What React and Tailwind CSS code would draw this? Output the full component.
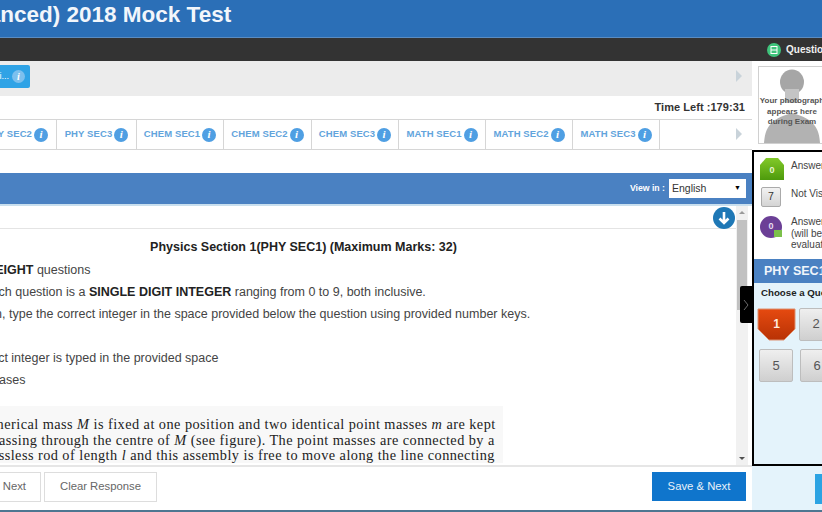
const sans = { fontFamily: '"Liberation Sans", Arial, sans-serif' };

function Info({ size = 14, className = "" }) {
  return (
    <span
      className={`inline-flex shrink-0 items-center justify-center rounded-full bg-[#4f9fe3] text-white font-bold italic ${className}`}
      style={{ width: size, height: size, fontSize: size - 3, fontFamily: '"Liberation Serif", serif', lineHeight: 1 }}
    >
      i
    </span>
  );
}

function Tab({ label, w }) {
  return (
    <div className={`${w} h-full shrink-0 flex items-center justify-center gap-[2px] border-r border-[#d6d6d6] text-[9.5px] font-bold text-[#62a4dc] tracking-[0.1px]`}>
      <span>{label}</span>
      <Info />
    </div>
  );
}

function Arrow() {
  return <div className="h-0 w-0 border-y-[6px] border-y-transparent border-l-[6px] border-l-[#c9d3da]" />;
}

function QBtn({ n, className = "" }) {
  return (
    <div className={`w-[34px] h-[33px] shrink-0 flex items-center justify-center rounded-[2px] border border-[#bdbdbd] bg-gradient-to-b from-[#efefef] to-[#cfcfcf] text-[13px] text-[#555] ${className}`}>
      {n}
    </div>
  );
}

export default function App() {
  return (
    <div className="w-[822px] h-[512px] overflow-hidden flex flex-col bg-white text-[#333]" style={sans}>
      <div className="h-[38px] shrink-0 bg-[#2b6fb7] border-b border-[#5a8cc2] flex items-center">
        <span className="ml-[-111px] whitespace-nowrap text-[22.5px] font-bold text-[#f2f6fb] leading-none pb-[7px]">JEE (Advanced) 2018 Mock Test</span>
      </div>
      <div className="h-[23px] shrink-0 bg-[#333333] flex items-center justify-end">
        <div className="w-[70px] shrink-0 flex items-center gap-[5px] pl-[15px] overflow-hidden whitespace-nowrap text-[10px] font-bold text-[#f0f0f0]">
          <svg width="14" height="14" viewBox="0 0 14 14" className="shrink-0">
            <circle cx="7" cy="7" r="7" fill="#3fc47c" />
            <rect x="4" y="3.5" width="6" height="7" fill="none" stroke="#fff" strokeWidth="1" />
            <path d="M4 7h6" stroke="#fff" strokeWidth="1" />
          </svg>
          <span>Question Paper</span>
        </div>
      </div>
      <div className="flex-1 min-h-0 flex">
        <div className="w-[752px] shrink-0 flex flex-col relative">
          <div className="h-[35px] shrink-0 bg-[#ececec] flex items-center justify-between pr-[10px] pb-[5px]">
            <div className="h-[23px] w-[30px] mt-[1px] bg-[#2fa3e6] rounded-r-[2px] flex items-center justify-end gap-[3px] pr-[5px] text-[9px] text-white overflow-hidden whitespace-nowrap">
              <span>i...</span>
              <Info size={13} className="!bg-[#7cc0ee]" />
            </div>
            <Arrow />
          </div>
          <div className="h-[23px] shrink-0 flex items-center justify-end pr-[7px] text-[11px] font-bold tracking-[0.05px] text-[#333]">Time Left :179:31</div>
          <div className="h-[31px] shrink-0 border-y border-[#d6d6d6] flex items-center overflow-hidden relative">
            <div className="flex h-full ml-[-32px]">
              <div className="w-[89px] h-full shrink-0 flex items-center justify-end gap-[2px] pr-[8px] border-r border-[#d6d6d6] text-[9.5px] font-bold text-[#62a4dc] tracking-[0.1px]">
                <span>PHY SEC2</span>
                <Info />
              </div>
              <Tab label="PHY SEC3" w="w-[80px]" />
              <Tab label="CHEM SEC1" w="w-[87px]" />
              <Tab label="CHEM SEC2" w="w-[88px]" />
              <Tab label="CHEM SEC3" w="w-[87px]" />
              <Tab label="MATH SEC1" w="w-[87px]" />
              <Tab label="MATH SEC2" w="w-[87px]" />
              <Tab label="MATH SEC3" w="w-[87px]" />
            </div>
            <div className="absolute right-[10px] top-[8px]"><Arrow /></div>
          </div>
          <div className="h-[23px] shrink-0" />
          <div className="h-[33px] shrink-0 bg-[#4a81c2] border-b-[2px] border-[#c9dfee] flex items-center justify-end pr-[6px] gap-[4px]">
            <span className="text-[8.7px] font-bold text-white">View in :</span>
            <div className="w-[77px] h-[19px] bg-white flex items-center justify-between pl-[3px] pr-[5px] text-[10.5px] text-[#333]">
              <span>English</span>
              <span className="text-[7px] text-black">▼</span>
            </div>
          </div>
          <div className="h-[259px] shrink-0 flex pr-[4px]">
            <div className="flex-1 min-w-0 flex flex-col overflow-hidden">
              <div className="h-[23px] shrink-0 border-b border-[#e4e4e4] flex justify-end items-start pt-[1px]">
                <svg width="22" height="22" viewBox="0 0 22 22" className="shrink-0 mr-[1px]">
                  <circle cx="11" cy="11" r="11" fill="#1f78b6" />
                  <path d="M11 5v11M6.5 11.5L11 16l4.5-4.5" fill="none" stroke="#fff" strokeWidth="2.6" />
                </svg>
              </div>
              <div className="h-[35px] shrink-0 flex items-center justify-center pt-[1px]">
                <span className="text-[12.5px] font-bold text-[#222] ml-[-129px]">Physics Section 1(PHY SEC1) (Maximum Marks: 32)</span>
              </div>
              <div className="text-[12.5px] leading-[22px] whitespace-nowrap text-[#444] mt-[-5px]">
                <div className="ml-[-125px]">This section contains <b className="text-[#222]">EIGHT</b> questions</div>
                <div className="ml-[-98px]">The answer to each question is a <b className="text-[#222]">SINGLE DIGIT INTEGER</b> ranging from 0 to 9, both inclusive.</div>
                <div className="ml-[-98px]">For each question, type the correct integer in the space provided below the question using provided number keys.</div>
                <div className="h-[22px]" />
                <div className="ml-[-88px]">If only the correct integer is typed in the provided space</div>
                <div className="ml-[-69px]">In all other cases</div>
              </div>
              <div className="mt-[15px] w-[503px] h-[57px] shrink-0 bg-[#f8f8f8] overflow-hidden pt-[11px]">
                <div className="text-[14.3px] leading-[15.5px] whitespace-nowrap text-[#222] tracking-[0.45px]" style={{ fontFamily: '"Liberation Serif", serif' }}>
                  <div className="ml-[-31px]">A spherical mass <i>M</i> is fixed at one position and two identical point masses <i>m</i> are kept</div>
                  <div className="ml-[-66px]">on a line passing through the centre of <i>M</i> (see figure). The point masses are connected by a</div>
                  <div className="ml-[-53px]">rigid massless rod of length <i>l</i> and this assembly is free to move along the line connecting</div>
                </div>
              </div>
            </div>
            <div className="w-[12px] shrink-0 bg-[#f1f1f1] flex flex-col items-center justify-between py-[5px] relative">
              <div className="h-0 w-0 border-x-[3px] border-x-transparent border-b-[3px] border-b-[#9a9a9a]" />
              <div className="absolute left-[1px] right-[1px] top-[14px] h-[90px] bg-[#c1c1c1]" />
              <div className="h-0 w-0 border-x-[3px] border-x-transparent border-t-[3px] border-t-[#505050]" />
            </div>
          </div>
          <div className="h-[45px] shrink-0 border-t-[2px] border-[#e6e6e6] flex items-center justify-between pr-[6px] pb-[4px]">
            <div className="flex gap-[3px] text-[11.3px] text-[#666]">
              <div className="w-[42px] h-[30px] ml-[-1px] border border-[#ddd] flex items-center justify-end pr-[14px]">Next</div>
              <div className="w-[113px] h-[30px] border border-[#ddd] flex items-center justify-center">Clear Response</div>
            </div>
            <div className="w-[94px] h-[29px] bg-[#0f75cc] text-[11.3px] text-[#e8f1fa] flex items-center justify-center">Save &amp; Next</div>
          </div>
          <div className="absolute left-[740px] top-[225px] w-[12px] h-[37px] bg-black rounded-l-[2px] flex items-center justify-center">
            <svg width="6" height="12" viewBox="0 0 6 12"><path d="M1 1l4 5-4 5" fill="none" stroke="#888" strokeWidth="0.8" /></svg>
          </div>
        </div>
        <div className="flex-1 min-w-0 flex flex-col bg-[#e4f3fb] overflow-hidden">
          <div className="h-[89px] shrink-0 bg-white pl-[6px] pt-[5px]">
            <div className="w-[90px] h-[78px] border border-[#d0d0d0] relative overflow-hidden">
              <svg width="88" height="76" viewBox="0 0 88 76" className="absolute left-0 top-0">
                <ellipse cx="33" cy="15" rx="12" ry="12.5" fill="#a6a6a6" />
                <path d="M26 22h14v14H26z" fill="#c4c4c4" />
                <path d="M5 76c1-14 5-24 28-30 23 6 27 16 28 30z" fill="#b2b2b2" />
              </svg>
              <div className="absolute left-[-2px] w-[70px] top-[29px] text-center text-[8px] font-bold leading-[10.5px] text-[#555]">
                Your photograph appears here during Exam
              </div>
            </div>
          </div>
          <div className="h-[316px] shrink-0 border-2 border-r-0 border-black flex flex-col">
            <div className="h-[107px] shrink-0 bg-white relative text-[10px] text-[#444] whitespace-nowrap">
              <svg width="24" height="22" viewBox="0 0 24 22" className="absolute left-[6px] top-[6px]">
                <defs>
                  <linearGradient id="g" x1="0" y1="0" x2="0" y2="1"><stop offset="0" stopColor="#82c929" /><stop offset="1" stopColor="#4d9a0c" /></linearGradient>
                </defs>
                <path d="M6 0h12l6 7v15H0V7z" fill="url(#g)" />
                <text x="12" y="15" textAnchor="middle" fontSize="9" fontWeight="bold" fill="#e8f5d0">0</text>
              </svg>
              <span className="absolute left-[37px] top-[6px]">Answered</span>
              <div className="absolute left-[7px] top-[35px] w-[20px] h-[20px] border border-[#aaa] rounded-[2px] bg-gradient-to-b from-[#f2f2f2] to-[#d4d4d4] flex items-center justify-center text-[10.5px] text-[#333]">7</div>
              <span className="absolute left-[37px] top-[34px]">Not Visited</span>
              <svg width="24" height="24" viewBox="0 0 24 24" className="absolute left-[6px] top-[64px]">
                <circle cx="11" cy="11" r="11" fill="#6b3f96" />
                <text x="11" y="13" textAnchor="middle" fontSize="9" fontWeight="bold" fill="#e6dcef">0</text>
                <rect x="14" y="14" width="8" height="7" fill="#7cc04b" />
              </svg>
              <div className="absolute left-[37px] top-[64px] leading-[11.5px]">
                <div>Answered &amp; Marked</div>
                <div>(will be considered for</div>
                <div>evaluation)</div>
              </div>
            </div>
            <div className="h-[24px] shrink-0 bg-[#4a81c2] pl-[10px] flex items-center text-[12.5px] font-bold text-[#f0f5fb] whitespace-nowrap">PHY SEC1</div>
            <div className="h-[20px] shrink-0 pl-[7px] flex items-center text-[9.7px] font-bold text-[#222] whitespace-nowrap">Choose a Question</div>
            <div className="flex items-center gap-[3px] pl-[3px] h-[36px] shrink-0 mt-[3px]">
              <svg width="39" height="33" viewBox="0 0 39 33" className="shrink-0">
                <defs>
                  <linearGradient id="r" x1="0" y1="0" x2="0" y2="1"><stop offset="0" stopColor="#e64a10" /><stop offset="1" stopColor="#b83205" /></linearGradient>
                </defs>
                <path d="M1 1h37v20l-11 11H12L1 21z" fill="url(#r)" stroke="#dd9070" />
                <text x="19.5" y="20" textAnchor="middle" fontSize="12" fontWeight="bold" fill="#ffeadd">1</text>
              </svg>
              <QBtn n="2" />
            </div>
            <div className="flex gap-[7px] pl-[5px] mt-[7px]">
              <QBtn n="5" />
              <QBtn n="6" />
            </div>
          </div>
          <div className="flex justify-start pl-[63px] pt-[8px]">
            <div className="w-[30px] h-[30px] bg-[#2ba3e3]" />
          </div>
        </div>
      </div>
      <div className="h-[2px] shrink-0 bg-[#4d7691]" />
    </div>
  );
}
